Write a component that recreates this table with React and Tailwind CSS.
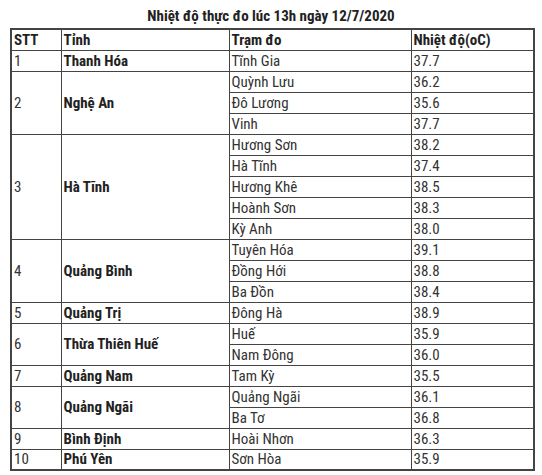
import React from 'react';

const data = [
  { stt: '1', tinh: 'Thanh Hóa', tram: [['Tĩnh Gia', '37.7']] },
  { stt: '2', tinh: 'Nghệ An', tram: [['Quỳnh Lưu', '36.2'], ['Đô Lương', '35.6'], ['Vinh', '37.7']] },
  { stt: '3', tinh: 'Hà Tĩnh', tram: [['Hương Sơn', '38.2'], ['Hà Tĩnh', '37.4'], ['Hương Khê', '38.5'], ['Hoành Sơn', '38.3'], ['Kỳ Anh', '38.0']] },
  { stt: '4', tinh: 'Quảng Bình', tram: [['Tuyên Hóa', '39.1'], ['Đồng Hới', '38.8'], ['Ba Đồn', '38.4']] },
  { stt: '5', tinh: 'Quảng Trị', tram: [['Đông Hà', '38.9']] },
  { stt: '6', tinh: 'Thừa Thiên Huế', tram: [['Huế', '35.9'], ['Nam Đông', '36.0']] },
  { stt: '7', tinh: 'Quảng Nam', tram: [['Tam Kỳ', '35.5']] },
  { stt: '8', tinh: 'Quảng Ngãi', tram: [['Quảng Ngãi', '36.1'], ['Ba Tơ', '36.8']] },
  { stt: '9', tinh: 'Bình Định', tram: [['Hoài Nhơn', '36.3']] },
  { stt: '10', tinh: 'Phú Yên', tram: [['Sơn Hòa', '35.9']] },
];

const cell = 'border border-[#444] px-[2px] h-[21px] p-0 leading-[18px]';

export default function App() {
  return (
    <div className="w-[542px] h-[475px] bg-white text-[#333] text-[15px] [font-stretch:87.5%] font-['Roboto',sans-serif]">
      <div className="h-[28px] pt-[7px] text-center font-bold text-[#222] leading-[18px]">
        Nhiệt độ thực đo lúc 13h ngày 12/7/2020
      </div>
      <table className="ml-[10px] w-[523px] border-collapse border-2 border-[#444] table-fixed">
        <colgroup>
          <col className="w-[50px]" />
          <col className="w-[168px]" />
          <col className="w-[182px]" />
          <col className="w-[123px]" />
        </colgroup>
        <thead>
          <tr className="font-bold text-[#222]">
            <td className={cell}>STT</td>
            <td className={cell}>Tỉnh</td>
            <td className={cell}>Trạm đo</td>
            <td className={cell}>Nhiệt độ(oC)</td>
          </tr>
        </thead>
        <tbody>
          {data.map((d) =>
            d.tram.map((t, i) => (
              <tr key={d.stt + t[0]}>
                {i === 0 && (
                  <td rowSpan={d.tram.length} className={cell}>{d.stt}</td>
                )}
                {i === 0 && (
                  <td rowSpan={d.tram.length} className={cell + ' font-bold text-[#222]'}>{d.tinh}</td>
                )}
                <td className={cell}>{t[0]}</td>
                <td className={cell}>{t[1]}</td>
              </tr>
            ))
          )}
        </tbody>
      </table>
    </div>
  );
}
